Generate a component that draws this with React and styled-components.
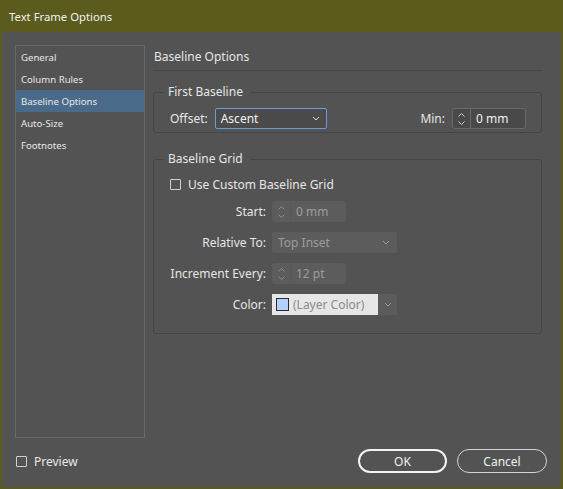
import React from 'react'
import styled, { createGlobalStyle } from 'styled-components'

const GlobalStyle = createGlobalStyle`
  html, body {
    margin: 0;
    padding: 0;
    background: #535353;
  }
  * { box-sizing: border-box; }
`

const FONT = `"Noto Sans", "Open Sans", "Liberation Sans", sans-serif`

const Window = styled.div`
  width: 563px;
  height: 489px;
  display: flex;
  flex-direction: column;
  background: #535353;
  border: 2px solid #5b5b1e;
  border-top: none;
  font-family: ${FONT};
  color: #e4e4e4;
  overflow: hidden;
`

const TitleBar = styled.div`
  height: 32px;
  flex: none;
  margin: 0 -2px;
  padding: 0 0 0 9px;
  display: flex;
  align-items: center;
  background: #5b5b1e;
  color: #f2f2f2;
  font-size: 11.3px;
`

const Body = styled.div`
  flex: 1;
  display: flex;
  flex-direction: column;
  padding: 13px 14px 0 13px;
`

const Main = styled.div`
  display: flex;
  gap: 8px;
  height: 393px;
`

const NavList = styled.div`
  width: 130px;
  flex: none;
  border: 1px solid #696969;
  display: flex;
  flex-direction: column;
`

const NavItem = styled.div`
  height: 22px;
  display: flex;
  align-items: center;
  padding-left: 5px;
  font-size: 9.6px;
  color: #e8e8e8;
  background: ${p => (p.$active ? '#4a6a89' : 'transparent')};
`

const Pane = styled.div`
  flex: 1;
  margin-right: 5px;
  display: flex;
  flex-direction: column;
`

const Heading = styled.div`
  height: 26px;
  display: flex;
  align-items: center;
  padding: 0 0 2px 1px;
  font-size: 12px;
  color: #e6e6e6;
  border-bottom: 1px solid #474747;
`

const Group = styled.fieldset`
  margin: ${p => p.$top}px 0 0 0;
  padding: ${p => p.$pad};
  border: 1px solid #454545;
  border-radius: 3px;
  min-width: 0;
`

const Legend = styled.legend`
  margin-left: -6px;
  padding: 0 7px 0 4px;
  font-size: 12px;
  color: #e6e6e6;
  line-height: 16px;
`

const Row = styled.div`
  display: flex;
  align-items: center;
  gap: ${p => p.$gap || 7}px;
  font-size: 12px;
`

const Spacer = styled.div`
  flex: 1;
`

const Label = styled.span`
  color: #e6e6e6;
  font-size: 12px;
  white-space: nowrap;
`

const Select = styled.div`
  width: ${p => p.$w}px;
  height: 21px;
  display: flex;
  align-items: center;
  padding: 0 6px 0 5px;
  border-radius: 2px;
  border: 1px solid ${p => (p.$focus ? '#6d9bd6' : 'transparent')};
  background: ${p => (p.$disabled ? '#5c5c5c' : '#4b4b4b')};
  color: ${p => (p.$disabled ? '#9c9c9c' : '#f0f0f0')};
  font-size: 12px;
`

const SelectText = styled.span`
  flex: 1;
`

const Spinner = styled.div`
  width: 74px;
  height: 21px;
  display: flex;
  align-items: stretch;
  border-radius: 3px;
  border: 1px solid ${p => (p.$disabled ? 'transparent' : '#696969')};
  background: ${p => (p.$disabled ? '#5c5c5c' : '#494949')};
  color: ${p => (p.$disabled ? '#9c9c9c' : '#f0f0f0')};
  font-size: 12px;
`

const SpinArrows = styled.div`
  width: 18px;
  flex: none;
  display: flex;
  align-items: center;
  justify-content: center;
  border-right: 1px solid ${p => (p.$disabled ? '#585858' : '#696969')};
`

const SpinValue = styled.div`
  display: flex;
  align-items: center;
  padding-left: 5px;
`

const Check = styled.span`
  width: 11px;
  height: 11px;
  flex: none;
  border: 1px solid #cfcfcf;
  border-radius: 1px;
`

const FormGrid = styled.div`
  display: grid;
  grid-template-columns: 96px auto;
  column-gap: 6px;
  row-gap: 10px;
  align-items: center;
  justify-content: start;
  margin-top: 8px;
`

const GridLabel = styled(Label)`
  text-align: right;
`

const ColorSelect = styled.div`
  width: 125px;
  height: 21px;
  display: flex;
  align-items: stretch;
  background: #5c5c5c;
  border-radius: 2px;
  font-size: 12px;
`

const ColorField = styled.div`
  width: 106px;
  display: flex;
  align-items: center;
  gap: 4px;
  padding-left: 4px;
  background: #e6e6e6;
  color: #8a8a8a;
`

const Swatch = styled.span`
  width: 13px;
  height: 13px;
  background: #b4d0ff;
  border: 1px solid #2a2a2a;
`

const ColorArrow = styled.div`
  flex: 1;
  display: flex;
  align-items: center;
  justify-content: center;
`

const Footer = styled.div`
  flex: 1;
  display: flex;
  align-items: flex-start;
  padding-top: 11px;
`

const PreviewRow = styled.label`
  display: flex;
  align-items: center;
  gap: 7px;
  margin-top: 4px;
  margin-left: 1px;
  font-size: 12px;
  color: #e8e8e8;
`

const Buttons = styled.div`
  margin-left: auto;
  display: flex;
  gap: 10px;
`

const Button = styled.button`
  width: ${p => p.$w}px;
  height: 24px;
  border-radius: 12px;
  background: transparent;
  border: ${p => (p.$primary ? '2px solid #f2f2f2' : '1px solid #d4d4d4')};
  color: #f0f0f0;
  font-family: ${FONT};
  font-size: 12px;
  padding: 0;
`

const Chevron = ({ color = '#d8d8d8' }) => (
  <svg width="8" height="5" viewBox="0 0 8 5">
    <polyline points="1,1 4,4 7,1" fill="none" stroke={color} strokeWidth="1" />
  </svg>
)

const SpinIcon = ({ color = '#d0d0d0' }) => (
  <svg width="9" height="16" viewBox="0 0 9 16">
    <polyline points="1.5,5.5 4.5,2.5 7.5,5.5" fill="none" stroke={color} strokeWidth="1" />
    <polyline points="1.5,10.5 4.5,13.5 7.5,10.5" fill="none" stroke={color} strokeWidth="1" />
  </svg>
)

const NumberField = ({ value, disabled }) => (
  <Spinner $disabled={disabled}>
    <SpinArrows $disabled={disabled}>
      <SpinIcon color={disabled ? '#8c8c8c' : '#d0d0d0'} />
    </SpinArrows>
    <SpinValue>{value}</SpinValue>
  </Spinner>
)

const navItems = ['General', 'Column Rules', 'Baseline Options', 'Auto-Size', 'Footnotes']

export default function App() {
  return (
    <>
      <GlobalStyle />
      <Window>
        <TitleBar>Text Frame Options</TitleBar>
        <Body>
          <Main>
            <NavList>
              {navItems.map(item => (
                <NavItem key={item} $active={item === 'Baseline Options'}>
                  {item}
                </NavItem>
              ))}
            </NavList>
            <Pane>
              <Heading>Baseline Options</Heading>
              <Group $top={13} $pad="8px 15px 3px 16px">
                <Legend>First Baseline</Legend>
                <Row>
                  <Label>Offset:</Label>
                  <Select $w={112} $focus>
                    <SelectText>Ascent</SelectText>
                    <Chevron />
                  </Select>
                  <Spacer />
                  <Label>Min:</Label>
                  <NumberField value="0 mm" />
                </Row>
              </Group>
              <Group $top={18} $pad="9px 15px 18px 16px">
                <Legend>Baseline Grid</Legend>
                <Row>
                  <Check />
                  <Label>Use Custom Baseline Grid</Label>
                </Row>
                <FormGrid>
                  <GridLabel>Start:</GridLabel>
                  <NumberField value="0 mm" disabled />
                  <GridLabel>Relative To:</GridLabel>
                  <Select $w={125} $disabled>
                    <SelectText>Top Inset</SelectText>
                    <Chevron color="#9a9a9a" />
                  </Select>
                  <GridLabel>Increment Every:</GridLabel>
                  <NumberField value="12 pt" disabled />
                  <GridLabel>Color:</GridLabel>
                  <ColorSelect>
                    <ColorField>
                      <Swatch />
                      (Layer Color)
                    </ColorField>
                    <ColorArrow>
                      <Chevron color="#9a9a9a" />
                    </ColorArrow>
                  </ColorSelect>
                </FormGrid>
              </Group>
            </Pane>
          </Main>
          <Footer>
            <PreviewRow>
              <Check />
              Preview
            </PreviewRow>
            <Buttons>
              <Button $primary $w={89}>OK</Button>
              <Button $w={90}>Cancel</Button>
            </Buttons>
          </Footer>
        </Body>
      </Window>
    </>
  )
}
